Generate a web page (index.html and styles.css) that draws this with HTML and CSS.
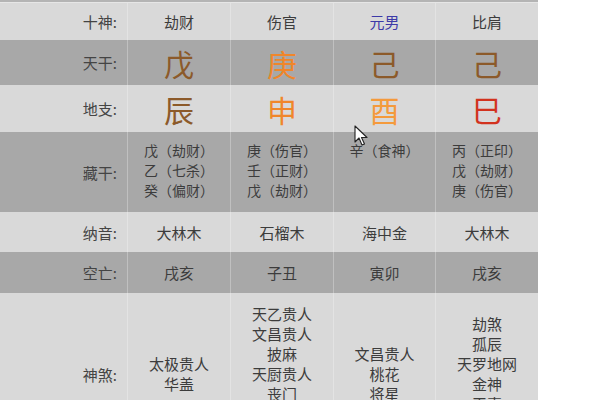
FILE: index.html
```html
<!DOCTYPE html>
<html lang="zh">
<head>
<meta charset="utf-8">
<link rel="stylesheet" href="styles.css">
</head>
<body>
<div class="page">
  <div class="table">
    <div class="topstrip"></div>
    <div class="row light r1">
      <div class="cell label">十神:</div>
      <div class="cell">劫财</div>
      <div class="cell">伤官</div>
      <div class="cell self">元男</div>
      <div class="cell">比肩</div>
    </div>
    <div class="row dark r2">
      <div class="cell label">天干:</div>
      <div class="cell big brown">戊</div>
      <div class="cell big orange">庚</div>
      <div class="cell big brown">己</div>
      <div class="cell big brown">己</div>
    </div>
    <div class="row light r3">
      <div class="cell label">地支:</div>
      <div class="cell big brown">辰</div>
      <div class="cell big orange">申</div>
      <div class="cell big lightorange">酉</div>
      <div class="cell big red">巳</div>
    </div>
    <div class="row dark r4">
      <div class="cell label">藏干:</div>
      <div class="cell stack top"><span>戊（劫财）</span><span>乙（七杀）</span><span>癸（偏财）</span></div>
      <div class="cell stack top"><span>庚（伤官）</span><span>壬（正财）</span><span>戊（劫财）</span></div>
      <div class="cell stack top"><span>辛（食神）</span></div>
      <div class="cell stack top"><span>丙（正印）</span><span>戊（劫财）</span><span>庚（伤官）</span></div>
    </div>
    <div class="row light r5">
      <div class="cell label">纳音:</div>
      <div class="cell">大林木</div>
      <div class="cell">石榴木</div>
      <div class="cell">海中金</div>
      <div class="cell">大林木</div>
    </div>
    <div class="row dark r6">
      <div class="cell label">空亡:</div>
      <div class="cell">戌亥</div>
      <div class="cell">子丑</div>
      <div class="cell">寅卯</div>
      <div class="cell">戌亥</div>
    </div>
    <div class="row light r7">
      <div class="cell label">神煞:</div>
      <div class="cell stack"><span>太极贵人</span><span>华盖</span></div>
      <div class="cell stack"><span>天乙贵人</span><span>文昌贵人</span><span>披麻</span><span>天厨贵人</span><span>丧门</span><span>红鸾</span><span>亡神</span></div>
      <div class="cell stack"><span>文昌贵人</span><span>桃花</span><span>将星</span></div>
      <div class="cell stack"><span>劫煞</span><span>孤辰</span><span>天罗地网</span><span>金神</span><span>天喜</span><span>月德</span></div>
    </div>
  </div>
  <svg class="cursor" width="14" height="22" viewBox="0 0 14 22">
    <path d="M1 1 L1 17 L5 13 L8 20 L10.5 19 L7.5 12.5 L13 12.5 Z" fill="#fff" stroke="#222" stroke-width="1.1" stroke-linejoin="round"/>
  </svg>
</div>
</body>
</html>
```

FILE: styles.css
```css
html, body {
  margin: 0;
  padding: 0;
  background: #ffffff;
}

body {
  font-family: "Noto Sans CJK SC", "Noto Sans", sans-serif;
  color: #3c3c3c;
  overflow: hidden;
}

.page {
  position: relative;
  width: 600px;
  height: 400px;
  overflow: hidden;
}

.table {
  width: 538px;
  display: flex;
  flex-direction: column;
}

.topstrip {
  height: 2px;
  background: #b4b4b4;
  border-bottom: 1px solid #e6e6e6;
}

.row {
  display: grid;
  grid-template-columns: 127px 103px 103px 102px 103px;
}

.light { background: #d9d9d9; }
.dark { background: #a8a8a8; }

.r1 { height: 37px; }
.r2 { height: 45px; }
.r3 { height: 47px; }
.r4 { height: 80px; }
.r5 { height: 40px; }
.r6 { height: 41px; }
.r7 { height: 162px; }

.cell {
  display: flex;
  align-items: center;
  justify-content: center;
  font-size: 15px;
  border-left: 1px solid rgba(255, 255, 255, 0.28);
  box-sizing: border-box;
}

.cell.label {
  justify-content: flex-end;
  padding-right: 10px;
  font-size: 15px;
  color: #444;
  border-left: none;
}

.self { color: #3d3aa8; }

.big {
  font-size: 30px;
  line-height: 1;
}

.brown { color: #8c5a2a; }
.orange { color: #f0862a; }
.lightorange { color: #f49a3c; }
.red { color: #d2321e; }

.stack {
  flex-direction: column;
  line-height: 20px;
}

.stack.top {
  justify-content: flex-start;
  padding-top: 8px;
  font-size: 14px;
}

.cursor {
  position: absolute;
  left: 354px;
  top: 125px;
}
```
